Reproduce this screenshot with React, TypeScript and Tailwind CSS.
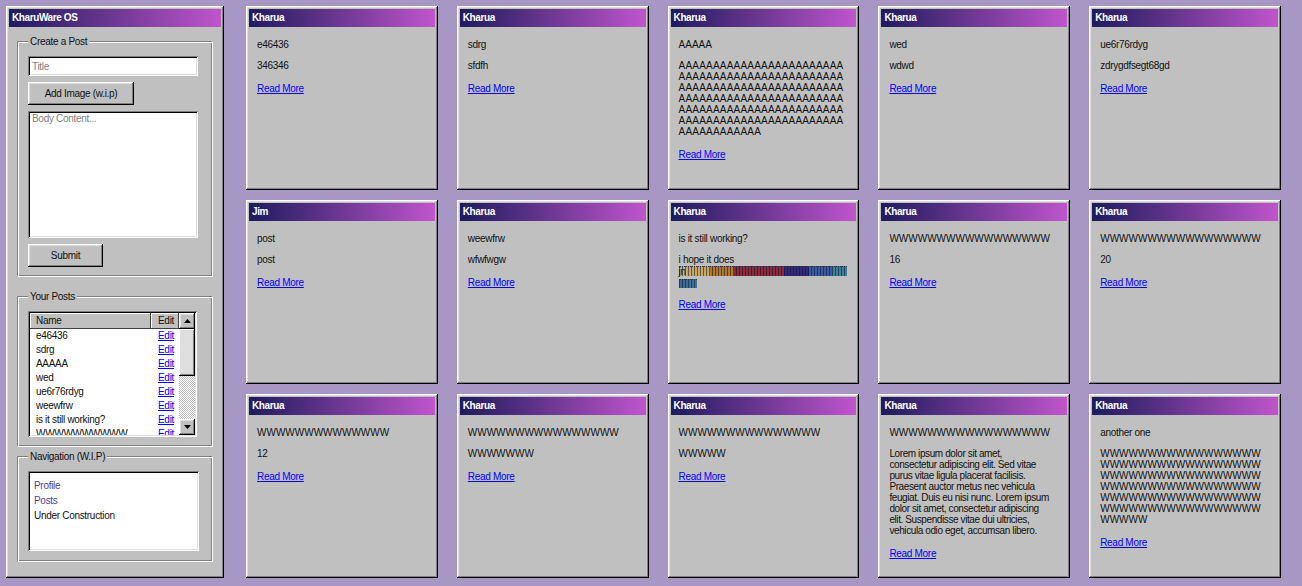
import React from "react";

const raised =
  "shadow-[inset_-1px_-1px_0_#000,inset_1px_1px_0_#fff,inset_-2px_-2px_0_#808080,inset_2px_2px_0_#dfdfdf]";
const sunken =
  "shadow-[inset_1px_1px_0_#808080,inset_-1px_-1px_0_#fff,inset_2px_2px_0_#000,inset_-2px_-2px_0_#dfdfdf]";
const groove =
  "border border-[#808080] border-r-white border-b-white shadow-[inset_1px_1px_0_#fff,inset_-1px_-1px_0_#808080]";
const headCell = "shadow-[inset_-1px_-1px_0_#404040,inset_1px_1px_0_#fff]";

function Card({ author = "Kharua", children }: { author?: string; children: React.ReactNode }) {
  return (
    <div className={`flex flex-col overflow-hidden bg-[#c0c0c0] p-[3px] ${raised}`}>
      <div className="h-[18px] shrink-0 bg-[linear-gradient(90deg,#1e1b5e,#c055cc)] pl-[3px] font-bold leading-[18px] tracking-[-0.4px] text-white">
        {author}
      </div>
      <div className="px-[8px] pt-[2px]">
        {children}
        <a href="#" className="mt-[11px] block w-fit leading-[13px] text-[#0000ff] underline">
          Read More
        </a>
      </div>
    </div>
  );
}

function P({ children, caps = false }: { children: React.ReactNode; caps?: boolean }) {
  return (
    <p className={caps ? "my-[10px] whitespace-nowrap leading-[11px] tracking-[0px]" : "my-[10px] leading-[11px]"}>
      {children}
    </p>
  );
}

function Lines({ lines, kind }: { lines: string[]; kind: "a" | "w" | "text" }) {
  const cls =
    kind === "a"
      ? "my-[10px] leading-[11px] tracking-[0.2px]"
      : kind === "w"
        ? "my-[10px] leading-[11px] tracking-[0px]"
        : "my-[10px] leading-[11px] tracking-[-0.4px]";
  return (
    <p className={cls}>
      {lines.map((l, i) => (
        <span key={i} className="block whitespace-nowrap">
          {l}
        </span>
      ))}
    </p>
  );
}

const A24 = "AAAAAAAAAAAAAAAAAAAAAAAA";
const W17 = "WWWWWWWWWWWWWWWWW";

function UpArrow() {
  return (
    <svg width="7" height="4" viewBox="0 0 7 4">
      <polygon points="0,4 3.5,0 7,4" fill="#000" />
    </svg>
  );
}
function DownArrow() {
  return (
    <svg width="7" height="4" viewBox="0 0 7 4">
      <polygon points="0,0 3.5,4 7,0" fill="#000" />
    </svg>
  );
}

const posts = [
  "e46436",
  "sdrg",
  "AAAAA",
  "wed",
  "ue6r76rdyg",
  "weewfrw",
  "is it still working?",
  "WWWWWWWWWW",
];

function Sidebar() {
  return (
    <aside className={`flex h-[572px] w-[218px] shrink-0 flex-col bg-[#c0c0c0] p-[3px] ${raised}`}>
      <div className="h-[18px] bg-[linear-gradient(90deg,#1e1b5e,#c055cc)] pl-[3px] font-bold leading-[18px] tracking-[-0.4px] text-white">
        KharuWare OS
      </div>
      <div className="px-[8px]">
        <fieldset className={`${groove} mt-[8px] px-[10px] pb-[9px] pt-[8px]`}>
          <legend className="bg-[#c0c0c0] px-[2px] leading-[13px]">Create a Post</legend>
          <input
            placeholder="Title"
            className={`block h-[20px] w-[170px] bg-white pl-[4px] outline-none placeholder:text-[#808080] ${sunken}`}
          />
          <button className={`mt-[6px] block h-[23px] w-[106px] bg-[#c0c0c0] ${raised}`}>Add Image (w.i.p)</button>
          <textarea
            placeholder="Body Content..."
            className={`mt-[6px] block h-[127px] w-[170px] resize-none bg-white pl-[4px] pt-[1px] leading-[13px] outline-none placeholder:text-[#808080] ${sunken}`}
          />
          <button className={`mt-[6px] block h-[23px] w-[75px] bg-[#c0c0c0] ${raised}`}>Submit</button>
        </fieldset>

        <fieldset className={`${groove} mt-[13px] px-[10px] pb-[9px] pt-[8px]`}>
          <legend className="bg-[#c0c0c0] px-[2px] leading-[13px]">Your Posts</legend>
          <div className={`flex h-[126px] w-[169px] bg-white p-[2px] ${sunken}`}>
            <div className="flex flex-1 flex-col overflow-hidden">
              <div className="flex h-[16px] shrink-0">
                <div className={`w-[121px] bg-[#c0c0c0] pl-[6px] leading-[16px] ${headCell}`}>Name</div>
                <div className={`flex-1 bg-[#c0c0c0] pl-[7px] leading-[16px] ${headCell}`}>Edit</div>
              </div>
              {posts.map((p, i) => (
                <div key={i} className="flex h-[14px] shrink-0 leading-[14px]">
                  <span className="w-[121px] overflow-hidden whitespace-nowrap pl-[6px]">{p}</span>
                  <a href="#" className="pl-[7px] text-[#0000ff] underline">
                    Edit
                  </a>
                </div>
              ))}
            </div>
            <div className="flex w-[16px] flex-col">
              <div className={`flex h-[16px] items-center justify-center bg-[#c0c0c0] ${raised}`}>
                <UpArrow />
              </div>
              <div className={`h-[47px] bg-[#dedede] ${raised}`} />
              <div className="flex-1 bg-[repeating-conic-gradient(#c0c0c0_0_25%,#fff_0_50%)] bg-[length:2px_2px]" />
              <div className={`flex h-[16px] items-center justify-center bg-[#c0c0c0] ${raised}`}>
                <DownArrow />
              </div>
            </div>
          </div>
        </fieldset>

        <fieldset className={`${groove} mt-[3px] px-[10px] pb-[10px] pt-[8px]`}>
          <legend className="bg-[#c0c0c0] px-[2px] leading-[13px]">Navigation (W.I.P)</legend>
          <div className={`h-[80px] w-[171px] bg-white pl-[6px] pt-[7px] leading-[15px] ${sunken}`}>
            <div className="text-[#553c8f]">Profile</div>
            <div className="text-[#553c8f]">Posts</div>
            <div className="text-[#111122]">Under Construction</div>
          </div>
        </fieldset>
      </div>
    </aside>
  );
}

export default function App() {
  return (
    <div className="flex min-h-[586px] w-full items-start gap-[22px] bg-[#a797c4] p-[6px] pr-[21px] font-['Liberation_Sans',Arial,sans-serif] text-[10px] tracking-[-0.3px] text-[#111]">
      <Sidebar />
      <main className="grid flex-1 auto-rows-[184px] grid-cols-5 gap-x-[19px] gap-y-[10px]">
        <Card>
          <P>e46436</P>
          <P>346346</P>
        </Card>
        <Card>
          <P>sdrg</P>
          <P>sfdfh</P>
        </Card>
        <Card>
          <P caps>AAAAA</P>
          <Lines kind="a" lines={[A24, A24, A24, A24, A24, A24, "AAAAAAAAAAAA"]} />
        </Card>
        <Card>
          <P>wed</P>
          <P>wdwd</P>
        </Card>
        <Card>
          <P>ue6r76rdyg</P>
          <P>zdrygdfsegt68gd</P>
        </Card>

        <Card author="Jim">
          <P>post</P>
          <P>post</P>
        </Card>
        <Card>
          <P>weewfrw</P>
          <P>wfwfwgw</P>
        </Card>
        <Card>
          <P>is it still working?</P>
          <p className="my-[10px] leading-[11px]">
            i hope it does
            <span className="block h-[11px] pt-[1px]">
              <span className="flex h-[10px] w-[168px] border-t border-dotted border-[#303050] bg-[repeating-linear-gradient(90deg,rgba(20,20,50,0.55)_0_1px,transparent_1px_3px),linear-gradient(90deg,#b8b090_0_5%,#c8a860_5%_18.5%,#b07828_18.5%_32.7%,#8c2a3a_32.7%_62.5%,#302a78_62.5%_77.4%,#3a5aa0_77.4%_91%,#3a8098_91%)] leading-[9px] text-[#202020]">
                jn
              </span>
            </span>
            <span className="block h-[11px] pt-[3px]">
              <span className="block h-[9px] w-[18px] border-t border-dotted border-[#303050] bg-[repeating-linear-gradient(90deg,rgba(20,20,50,0.55)_0_1px,transparent_1px_3px),linear-gradient(90deg,#3a6890,#3a7898)]" />
            </span>
          </p>
        </Card>
        <Card>
          <P caps>WWWWWWWWWWWWWWWWW</P>
          <P>16</P>
        </Card>
        <Card>
          <P caps>WWWWWWWWWWWWWWWWW</P>
          <P>20</P>
        </Card>

        <Card>
          <P caps>WWWWWWWWWWWWWW</P>
          <P>12</P>
        </Card>
        <Card>
          <P caps>WWWWWWWWWWWWWWWW</P>
          <P caps>WWWWWWW</P>
        </Card>
        <Card>
          <P caps>WWWWWWWWWWWWWWW</P>
          <P caps>WWWWW</P>
        </Card>
        <Card>
          <P caps>WWWWWWWWWWWWWWWWW</P>
          <Lines
            kind="text"
            lines={[
              "Lorem ipsum dolor sit amet,",
              "consectetur adipiscing elit. Sed vitae",
              "purus vitae ligula placerat facilisis.",
              "Praesent auctor metus nec vehicula",
              "feugiat. Duis eu nisi nunc. Lorem ipsum",
              "dolor sit amet, consectetur adipiscing",
              "elit. Suspendisse vitae dui ultricies,",
              "vehicula odio eget, accumsan libero.",
            ]}
          />
        </Card>
        <Card>
          <P>another one</P>
          <Lines kind="w" lines={[W17, W17, W17, W17, W17, W17, "WWWWW"]} />
        </Card>
      </main>
    </div>
  );
}
